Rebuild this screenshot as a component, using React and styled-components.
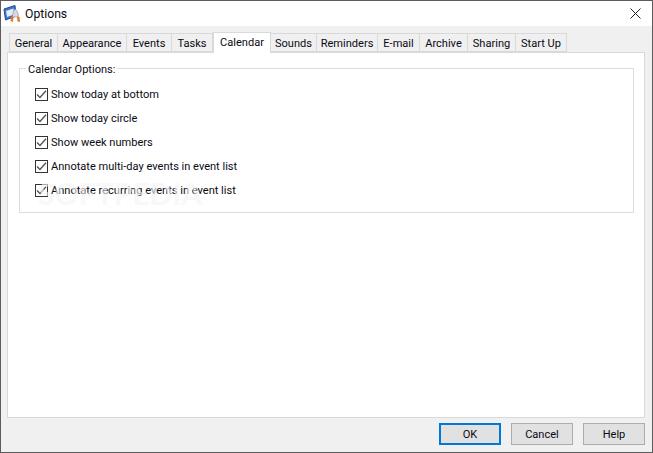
import styled, { createGlobalStyle } from "styled-components"

const Global = createGlobalStyle`
  html, body { margin: 0; padding: 0; background: #f0f0f0; overflow: hidden; }
  * { box-sizing: border-box; }
`
const Window = styled.div`
  width: 653px;
  height: 453px;
  display: flex;
  flex-direction: column;
  border: 1px solid #5c5c5c;
  background: #f0f0f0;
  font-family: Roboto, "Open Sans", sans-serif;
  font-size: 11.05px;
  color: #0a0a14;
`
const TitleBar = styled.div`
  height: 25px;
  flex: none;
  display: flex;
  align-items: center;
  gap: 3px;
  padding: 0 11px 0 2px;
  background: #fff;
  font-size: 12.2px;
  span { flex: 1; }
`
const Body = styled.div`
  flex: 1;
  display: flex;
  flex-direction: column;
  padding: 6px 7px 0 6px;
`
const TabRow = styled.div`
  height: 20px;
  flex: none;
  display: flex;
  align-items: flex-end;
  padding-left: 2px;
  position: relative;
  z-index: 1;
`
const Tab = styled.div`
  width: ${p => p.$w}px;
  height: ${p => (p.$active ? 21 : 19)}px;
  margin-bottom: ${p => (p.$active ? -1 : 0)}px;
  padding: ${p => (p.$active ? "0 0 2px" : "2px 0 0")};
  flex: none;
  display: flex;
  align-items: center;
  justify-content: center;
  background: ${p => (p.$active ? "#fff" : "#f0f0f0")};
  border: 1px solid #d9d9d9;
  border-left-width: ${p => (p.$active || p.$first ? 1 : 0)}px;
  border-bottom: ${p => (p.$active ? "none" : "1px solid #d9d9d9")};
`
const Page = styled.div`
  flex: 1;
  background: #fff;
  border: 1px solid #d9d9d9;
  padding: 7px 10px 0 11px;
  position: relative;
`
const Group = styled.fieldset`
  margin: 0;
  height: 153px;
  padding: 9px 0 0 15px;
  border: 1px solid #dcdcdc;
  display: flex;
  flex-direction: column;
  gap: 6px;
  legend {
    margin-left: -9px;
    padding: 3px 2px 0;
    line-height: 13px;
  }
`
const Row = styled.label`
  height: 18px;
  display: flex;
  align-items: center;
  gap: 3px;
`
const Box = styled.span`
  width: 13px;
  height: 13px;
  flex: none;
  display: flex;
  border: 1px solid #333;
  background: #fff;
`
const Watermark = styled.div`
  position: absolute;
  left: 30px;
  top: 124px;
  font-family: Lato, sans-serif;
  font-size: 30px;
  line-height: 32px;
  font-weight: 700;
  color: rgba(244, 244, 244, 0.65);
  pointer-events: none;
`
const Footer = styled.div`
  height: 34px;
  flex: none;
  display: flex;
  justify-content: flex-end;
  align-items: flex-start;
  gap: 10px;
  padding-top: 5px;
`
const Button = styled.button`
  width: 62px;
  height: 22px;
  padding: 0;
  font: inherit;
  color: inherit;
  background: #e1e1e1;
  border: ${p => (p.$primary ? "2px solid #0078d7" : "1px solid #adadad")};
`
const tabs = [
  ["General", 49], ["Appearance", 69], ["Events", 45], ["Tasks", 41], ["Calendar", 58], ["Sounds", 46],
  ["Reminders", 61], ["E-mail", 42], ["Archive", 48], ["Sharing", 48], ["Start Up", 51],
]
const options = [
  "Show today at bottom",
  "Show today circle",
  "Show week numbers",
  "Annotate multi-day events in event list",
  "Annotate recurring events in event list",
]

function AppIcon() {
  return (
    <svg width="19" height="19" viewBox="0 0 19 19">
      <path d="M1 5 L12 1.500 L13 12 L2.500 16 Z" fill="#3f78c8" stroke="#1f4a94" />
      <path d="M3 7 L10.500 4.500 L11 10.500 L4 13 Z" fill="#e4edf9" />
      <path d="M12 5 C14 6.500 15.500 9 15.500 13 L9.500 13 C9.500 10 10 7 12 5 Z" fill="#d8d8e2" stroke="#8a8a9a" strokeWidth=".6" />
      <path d="M8 13 L10.500 13 L10 18 L7.500 17 Z" fill="#ee7a1c" />
      <path d="M14 13 L16.500 13 L17 18 L14.500 17.500 Z" fill="#ee7a1c" />
    </svg>
  )
}

function Close() {
  return (
    <svg width="11" height="11" viewBox="0 0 11 11">
      <path d="M.5 .5 L10.500 10.500 M10.500 .5 L.5 10.500" stroke="#222" fill="none" />
    </svg>
  )
}

function Check() {
  return (
    <svg width="11" height="11" viewBox="0 0 11 11">
      <path d="M1 5.500 L4 8.500 L10 1.800" stroke="#555" strokeWidth="1.400" fill="none" />
    </svg>
  )
}

export default function App() {
  return (
    <Window>
      <Global />
      <TitleBar>
        <AppIcon />
        <span>Options</span>
        <Close />
      </TitleBar>
      <Body>
        <TabRow>
          {tabs.map(([name, w], i) => (
            <Tab key={name} $w={w} $first={i === 0} $active={name === "Calendar"}>{name}</Tab>
          ))}
        </TabRow>
        <Page>
          <Group>
            <legend>Calendar Options:</legend>
            {options.map(o => (
              <Row key={o}>
                <Box><Check /></Box>
                {o}
              </Row>
            ))}
          </Group>
          <Watermark>SOFTPEDIA</Watermark>
        </Page>
        <Footer>
          <Button $primary>OK</Button>
          <Button>Cancel</Button>
          <Button>Help</Button>
        </Footer>
      </Body>
    </Window>
  )
}
